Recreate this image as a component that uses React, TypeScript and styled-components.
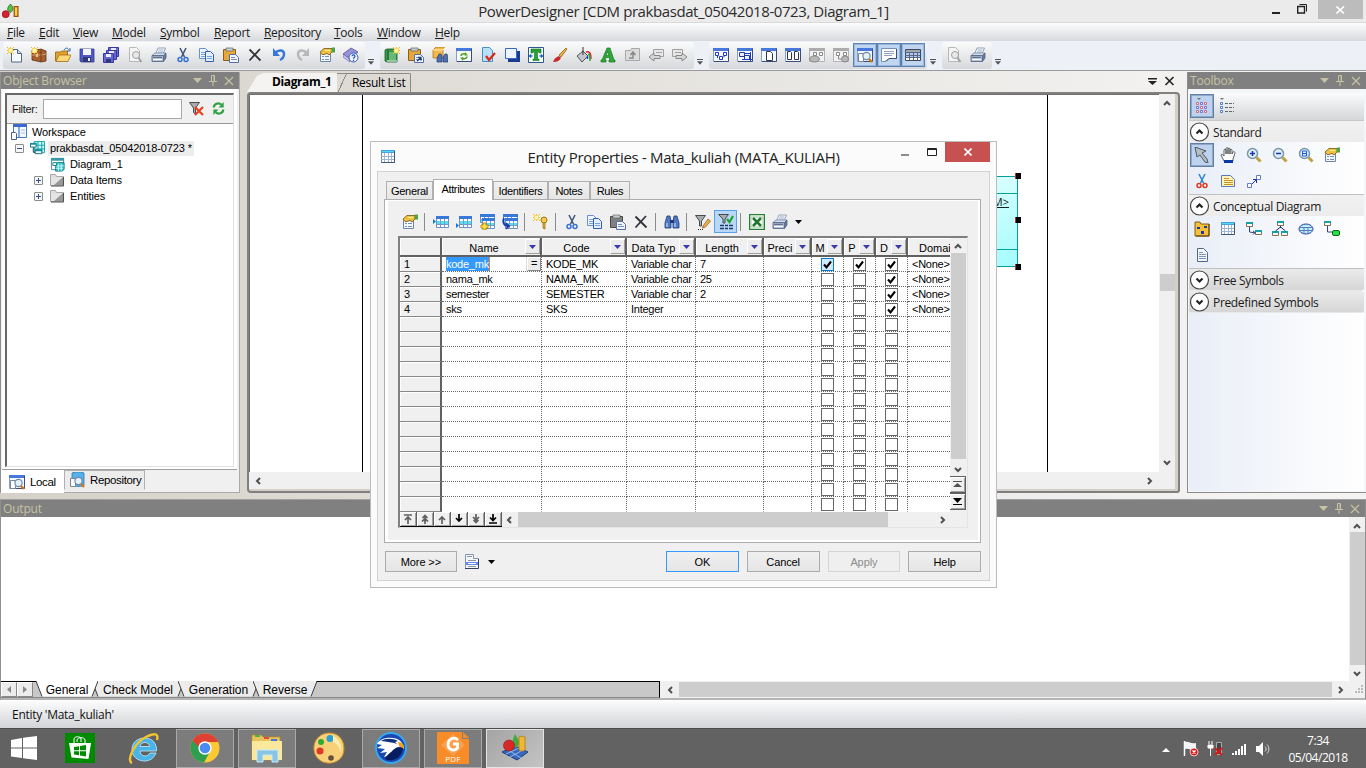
import React from 'react';
import styled, { createGlobalStyle, css } from 'styled-components';

const UI = `"Open Sans", "Noto Sans", sans-serif`;
const SANS = `"Liberation Sans", Arial, sans-serif`;

const Global = createGlobalStyle`
  *, *::before, *::after { box-sizing: border-box; }
  html, body { margin: 0; padding: 0; overflow: hidden; background: #d6d3cc; }
  svg { display: block; flex: none; }
`;

/* ---------- icons ---------- */

const star = (x: number, y: number) => (
  <g key={`s${x}${y}`}>
    <path d={`M${x} ${y}h1v1h-1zM${x + 3} ${y}h1v2h-1zM${x + 6} ${y}h1v1h-1zM${x} ${y + 6}h1v1h-1zM${x + 3} ${y + 5}h1v2h-1zM${x + 6} ${y + 6}h1v1h-1zM${x} ${y + 3}h2v1h-2zM${x + 5} ${y + 3}h2v1h-2z`} fill="#e8b838" />
    <path d={`M${x + 1} ${y + 1}h5v5h-5z`} fill="#f8d860" />
    <path d={`M${x + 2} ${y + 2}h3v3h-3z`} fill="#fff6b0" />
  </g>
);

const redX = (x: number, y: number, s: number, c = '#e03020', w = 2) => (
  <path d={`M${x} ${y}l${s} ${s}M${x + s} ${y}l${-s} ${s}`} stroke={c} strokeWidth={w} fill="none" />
);

const winFrame = (
  <>
    <path d="M.5 1.5h15v13H.5z" fill="#f4f8ff" stroke="#88a0cc" />
    <path d="M0 1h16v3H0z" fill="#4878dc" />
    <path d="M15.5 2v12.5H1" stroke="#3c4c78" fill="none" />
  </>
);
const grayFrame = (
  <>
    <path d="M.5 1.5h15v13H.5z" fill="#f2f2f2" stroke="#b4b4b4" />
    <path d="M0 1h16v3H0z" fill="#acacac" />
  </>
);
const tableBase = (x: number, y: number, w: number, h: number) => (
  <>
    <path d={`M${x + 0.5} ${y + 0.5}h${w - 1}v${h - 1}h${-(w - 1)}z`} fill="#fff" stroke="#6f8fc8" />
    <path d={`M${x} ${y}h${w}v3h${-w}z`} fill="#3878d8" />
    <path d={`M${x + 1} ${y + 5}h${w - 2}v3h${-(w - 2)}z`} fill="#58e0ec" />
    <path d={`M${x + 1} ${y + h - 3.5}h${w - 2}M${x + 4.5} ${y + 3}v${h - 4}M${x + 8.5} ${y + 3}v${h - 4}`} stroke="#7898c8" fill="none" />
  </>
);
const magnifier = (
  <>
    <circle cx="9.5" cy="9" r="3.6" fill="#e4f2fc" stroke="#7088a8" strokeWidth="1.2" />
    <path d="M12 12l3 3" stroke="#c87818" strokeWidth="2.4" />
  </>
);
const smallNode = (x: number, y: number, c = '#2038c8') => (
  <path d={`M${x + 0.5} ${y + 0.5}h3v3h-3z`} fill="#fff" stroke={c} />
);
const entNode = (x: number, y: number) => (
  <>
    <path d={`M${x + 0.5} ${y + 0.5}h6v4h-6z`} fill="#fff" stroke="#807050" />
    <path d={`M${x} ${y}h7v2h-7z`} fill="#18a0a8" />
  </>
);
const props = (
  <>
    <path d="M1.5 6.5h10v8h-10z" fill="#f4f8fc" stroke="#7088a8" />
    <path d="M3 9.5h2M6 9.5h4M3 12.5h2M6 12.5h4" stroke="#7890b0" />
    <path d="M1 5l4-3.500h8v3.500l-3 3-2-1.500-3 1H3z" fill="#f0c040" stroke="#705810" strokeWidth=".8" />
    <path d="M6 3.500h5" stroke="#fff0a0" />
    <path d="M13 .5h3v5h-3z" fill="#48a848" />
  </>
);
const scissors = (blade: string, handle: string) => (
  <>
    <path d="M5 1l4.5 9M11 1L6.5 10" stroke={blade} strokeWidth="1.6" fill="none" />
    <circle cx="5" cy="12.5" r="2" fill="none" stroke={handle} strokeWidth="1.5" />
    <circle cx="11" cy="12.5" r="2" fill="none" stroke={handle} strokeWidth="1.5" />
  </>
);
const copy = (
  <>
    <path d="M.5 1.5h6l3 3v7h-9z" fill="#f0f6ff" stroke="#6890d0" />
    <path d="M6.5 4.5h5l3 3v7h-8z" fill="#e4eefc" stroke="#3060b0" />
    <path d="M2 5.5h4M2 7.5h4M2 9.5h4M8 9.5h5M8 11.5h5" stroke="#78a0e0" />
  </>
);
const paste = (board: string, edge: string) => (
  <>
    <path d="M.5 2.5h12v11H.5z" fill={board} stroke={edge} />
    <path d="M3 1h7v3H3z" fill="#c8ccd4" stroke="#606468" strokeWidth=".7" />
    <path d="M6.5 7.5h6l3 3v5h-9z" fill="#f0f4fa" stroke="#5870a0" />
    <path d="M8 10.5h4M8 12.5h6" stroke="#7890b8" />
  </>
);
const printer = (
  <>
    <path d="M4.5 7L7 1h7.5L12 7z" fill="#fff" stroke="#8898b0" strokeWidth=".9" />
    <path d="M7.5 3h5M6.8 5h5" stroke="#98a8c0" />
    <path d="M1 8.5L4 6h11l-2.5 2.5z" fill="#d4dff0" stroke="#7084a4" strokeWidth=".8" />
    <path d="M12.5 8.5L15 6v5l-2.5 3.5z" fill="#6c7c98" stroke="#50607c" strokeWidth=".8" />
    <path d="M1 8.5h11.5v6H1z" fill="#a8b8d0" stroke="#586c8c" strokeWidth=".9" />
    <path d="M2 12.5h9" stroke="#fff" strokeWidth="1.3" />
    <path d="M2 10.3h9" stroke="#546480" />
  </>
);
const binoc = (
  <>
    <path d="M3 2h3l1 5v7H1V9zM10 2h3l2 7v5H9V7z" fill="#5078c0" stroke="#203c78" strokeWidth=".8" />
    <path d="M6 6h4v3H6z" fill="#203c78" />
    <path d="M3 9v4M11 9v4" stroke="#b8d0f8" strokeWidth="1.3" />
  </>
);
const funnel = <path d="M.5 1.5h10L6.5 7v6l-2-1.5V7z" fill="#a8acb0" stroke="#484c50" />;
const cube = (
  <>
    <path d="M1.5 1.5h13v12h-13z" fill="#fff" stroke="#5c7c98" />
    <path d="M1 1h14v3H1z" fill="#3898a8" />
    <path d="M6 7l2-1h7v7l-2 2H6z" fill="#38c8c8" stroke="#087880" />
    <path d="M6 9.5h9M6 12h8M9 7v8M12 7v8" stroke="#e0ffff" strokeWidth=".8" />
    <path d="M3 6h4v3H3z" fill="#fff" stroke="#088088" />
  </>
);
const plainTable = (
  <>
    <path d="M1.5 1.5h13v12h-13z" fill="#fff" stroke="#7088ac" />
    <path d="M1 7.5h14M1 10.5h14M4.5 4v9M8.5 4v9M11.5 4v9" stroke="#a0b4d0" />
    <path d="M1 1h14v3H1z" fill="#48a0dc" />
    <path d="M2 2h12v1H2z" fill="#50d8f0" />
    <path d="M14.5 2v11.5h-13" stroke="#405878" fill="none" />
  </>
);
const zoomGlass = (inner: React.ReactNode) => (
  <>
    <path d="M10.5 10.5l4 4" stroke="#c0a040" strokeWidth="3" />
    <circle cx="6.5" cy="6.5" r="5" fill="#dcecf8" stroke="#7898a8" strokeWidth="1.5" />
    {inner}
  </>
);
const folder = (
  <>
    <path d="M1.5 2.5h5l1 2h7v9h-13z" fill="#dcdcdc" stroke="#a8a8a8" />
    <path d="M2 5h12v8H2z" fill="#e4e4e4" />
    <path d="M14 5v8H5z" fill="#989898" />
    <path d="M14.5 5v9H2" stroke="#505050" fill="none" />
  </>
);
const rowsArrow = (y: number) => (
  <>
    {tableBase(3, 2, 13, 12)}
    <path d={`M0 ${y}l3 2.5-3 2.5z`} fill="#1878e0" />
  </>
);

const ICONS: Record<string, React.ReactNode> = {
  newDoc: <><path d="M4.5 2.5h6l4 4v8.5h-10z" fill="#f8fbff" stroke="#506888" /><path d="M10.5 2.5v4h4" fill="#c8d8ec" stroke="#506888" />{star(0, 0)}</>,
  newProject: <><path d="M1 4l9-2 5 2v10l-5 1-9-2z" fill="#a86030" stroke="#5c3010" strokeWidth=".8" /><path d="M1 8h9l5-1" stroke="#d8a070" fill="none" /><path d="M10 3v12" stroke="#703c18" /><path d="M5 7h2v3H5z" fill="#f0c890" />{star(0, 0)}</>,
  open: <><path d="M.5 5h5l1-1h6v10H.5z" fill="#e0a030" stroke="#906010" strokeWidth=".8" /><path d="M4 8h12l-3 6.5H1z" fill="#fcd878" stroke="#a87018" strokeWidth=".8" /><path d="M9 3c2-3 4-2 5 0M15 1v3h-3" stroke="#3868b0" fill="none" /></>,
  save: <><path d="M1 2h14v13H2l-1-1z" fill="#5058c8" stroke="#303888" strokeWidth=".8" /><path d="M4 2h8v6H4z" fill="#f4f6ff" /><path d="M4 10h8v5H4z" fill="#303878" /><path d="M9 11h2v3H9z" fill="#e8ecff" /></>,
  saveAll: <>{[[5, 0], [3, 3], [0, 6]].map(([x, y]) => <g key={x}><path d={`M${x + 0.5} ${y + 0.5}h10v9h-10z`} fill="#6468d0" stroke="#38389c" /><path d={`M${x + 3} ${y + 1}h5v3h-5z`} fill="#e8ecff" /><path d={`M${x + 3} ${y + 6}h5v3h-5z`} fill="#303878" /></g>)}</>,
  previewGray: <><path d="M2.5.5h7l3 3v11h-10z" fill="#f4f4f4" stroke="#b8b8b8" /><circle cx="9" cy="8" r="3.5" fill="#e8e8e8" stroke="#a0a0a0" /><path d="M11.5 11l3 4" stroke="#a0a0a0" strokeWidth="2" /></>,
  printer, copy, binoc, cube, plainTable, folder, props,
  cut: scissors('#405878', '#3870d0'),
  cutRed: scissors('#3088d0', '#e03820'),
  paste: paste('#e8a838', '#886020'),
  pasteGray: paste('#808080', '#484848'),
  pasteLink: <>{paste('#e8a838', '#886020')}<path d="M9 14l4-3M10 10.5h3v3" stroke="#203878" fill="none" strokeWidth="1.3" /></>,
  del: <path d="M2.5 2.5l11 11M13 2L2.5 13.5" stroke="#303438" strokeWidth="1.800" fill="none" />,
  undo: <><path d="M4 6c4-4 9-3 9 1 0 3-2 5-4 6" stroke="#3878d8" strokeWidth="2.4" fill="none" /><path d="M2 1v8h7z" fill="#3878d8" /></>,
  redo: <><path d="M12 6C8 2 3 3 3 7c0 3 2 5 4 6" stroke="#b8b8b8" strokeWidth="2.4" fill="none" /><path d="M14 1v8H7z" fill="#b8b8b8" /></>,
  help: <><path d="M0 7l8-6 7 4-8 7z" fill="#9890d8" stroke="#5850a0" strokeWidth=".8" /><path d="M0 7l7 5v3L0 10z" fill="#c8c4ec" stroke="#5850a0" strokeWidth=".6" /><circle cx="10.5" cy="10.5" r="4.5" fill="#eef4ff" stroke="#3860b8" /><path d="M9 9.3c0-2 3-2 3 0 0 1.2-1.5 1-1.5 2.4M10.5 12.7v1.2" stroke="#2850b0" fill="none" strokeWidth="1.2" /></>,
  book: <><path d="M1 3l2-1h10v13H3l-2-1z" fill="#389848" stroke="#185828" strokeWidth=".8" /><path d="M3 14h10" stroke="#fff" /><path d="M4 3v10" stroke="#185828" /><path d="M5 5h7v8H5z" fill="#68b878" />{star(9, 0)}</>,
  findObj: <><path d="M1 3l3-3h10l-3 3v8H1z" fill="#f4b848" stroke="#a87820" strokeWidth=".8" /><path d="M1 3h10l3-3" stroke="#fff0b8" fill="none" /><path d="M7 7h2l1 3v5H5v-4zM13 7h2l1 4v4h-5v-5z" fill="#5070b0" stroke="#243c70" strokeWidth=".7" /></>,
  refreshWin: <>{winFrame}<path d="M5 9c0-2 3-3 5-1.5M11 9.500c0 2-3 3-5 1.5" stroke="#58a020" strokeWidth="1.6" fill="none" /><path d="M9 5l3 3.500H8.500zM7 14l-3-3.500h3.500z" fill="#58a020" /></>,
  check: <><path d="M2.5.5h7l3 3v11h-10z" fill="#b8e0f8" stroke="#4890c0" /><path d="M6 9l3 4 6-7" stroke="#d82818" strokeWidth="2.2" fill="none" /></>,
  shadow: <><path d="M4 4h12v11H4z" fill="#1c3c90" /><path d="M1.5 1.5h11v10h-11z" fill="#eef4ff" stroke="#3868c8" /></>,
  textFit: <><path d="M.5.5h15v15H.5z" fill="#f4fff4" stroke="#305890" /><path d="M3 2h10v4h-1.5L11 5H9.5v7H11v1.5H5V12h1.5V5H5l-.5 1H3z" fill="#28a038" stroke="#107020" strokeWidth=".6" /><path d="M1 9h4M11 9h4M1 9l2-1.5v3zM15 9l-2-1.5v3z" stroke="#2060c8" fill="#2060c8" strokeWidth=".8" /></>,
  brush: <><path d="M7 8l7-7 1 1-6 8z" fill="#e8b040" stroke="#98680c" strokeWidth=".8" /><path d="M1 15c1-3 3-5 6-6l2 2c-2 3-4 4-8 4z" fill="#c82828" /></>,
  bucket: <><path d="M1 9l6-5 5 5-6 6z" fill="#c4c8cc" stroke="#505458" /><path d="M7 0v8" stroke="#303030" /><path d="M10 5c4-1 5 2 5 7" stroke="#e02020" fill="none" strokeWidth="1.5" /><path d="M12 7c2 0 2 3 2 7" stroke="#20a838" fill="none" strokeWidth="1.5" /><path d="M11.5 9v3" stroke="#2040d0" strokeWidth="1.5" /></>,
  fontA: <path d="M7 1h3l4 12h1v2h-6v-2h1l-.8-2.5H5.7L5 13h1v2H1v-2h1zM6.3 8.5h2.6L7.6 4.3z" fill="#30a838" stroke="#187820" strokeWidth=".7" />,
  upGray: <><path d="M1.5 3.5h5l1-2h8v12h-14z" fill="#dcdcdc" stroke="#a8a8a8" /><path d="M5 11h4V6M6.5 8L9 5l2.5 3" stroke="#888" fill="none" strokeWidth="1.5" /></>,
  backGray: <><path d="M5.5 2.5h10v7h-10z" fill="#e8e8e8" stroke="#a0a0a0" /><path d="M8 5.5h6" stroke="#a0a0a0" /><path d="M1 10l5-4v2.5h6v3H6V14z" fill="#d8d8d8" stroke="#888" /></>,
  fwdGray: <><path d="M.5 2.5h10v7H.5z" fill="#e8e8e8" stroke="#a0a0a0" /><path d="M3 5.5h6" stroke="#a0a0a0" /><path d="M15 10l-5-4v2.5H4v3h6V14z" fill="#d8d8d8" stroke="#888" /></>,
  vLinks: <>{winFrame}{smallNode(2, 5)}{smallNode(10, 5)}<path d="M4.5 9v2M11.5 9l-1.500 1.500" stroke="#2038c8" fill="none" />{smallNode(6, 9)}</>,
  vNodes: <>{winFrame}<path d="M2.5 5.5h5v4h-5zM7.5 8.5h5v4h-5z" fill="#e8f0ff" stroke="#2038a8" /><path d="M8 6.5h6M13.5 5v9M5 12.5h10" stroke="#2038c8" /></>,
  vPage: <>{winFrame}<path d="M5.5 4.5h4l2 2v7h-6z" fill="#fff" stroke="#303848" /></>,
  vPages: <>{winFrame}<path d="M2.5 4.5h3l1 1v7h-4zM9.5 4.5h3l1 1v7h-4z" fill="#fff" stroke="#303848" /></>,
  vGray1: <>{grayFrame}{smallNode(4, 5, '#888')}{smallNode(10, 5, '#888')}<ellipse cx="5.5" cy="12" rx="5" ry="3" fill="#b8b8b8" stroke="#888" /></>,
  vGray2: <>{grayFrame}{smallNode(3, 5, '#888')}{smallNode(10, 5, '#888')}<path d="M5.5 9v3h4" stroke="#888" fill="none" /><ellipse cx="12" cy="12" rx="3.5" ry="3" fill="#b8b8b8" stroke="#888" /></>,
  vBrowse: <>{winFrame}<path d="M1.5 6.5h5v8h-5z" fill="#fff" stroke="#788898" />{magnifier}</>,
  vNote: <><path d="M.5 1.5h15v10H8l-4 3H.5z" fill="#fff" stroke="#7890b0" /><path d="M3 4.5h10M3 6.5h10M3 8.5h8" stroke="#90a4c0" /><path d="M15.5 2v9.5H8l-3 3" stroke="#405070" fill="none" /></>,
  vTable: <><path d="M.5 2.5h15v11H.5z" fill="#fff" stroke="#404858" /><path d="M1 3h14v2H1z" fill="#a0a8b4" /><path d="M1 6h14v5H1z" fill="#a8c8ff" /><path d="M0 5.5h15M0 8.5h15M0 10.5h15M4.5 5v8M8.5 5v8M12.5 5v8" stroke="#606878" /></>,
  funnelX: <>{funnel}{redX(6, 6, 8, '#e84020', 2.2)}</>,
  funnelEdit: <><path d="M.5 1.5h10L6.5 7v5h-2V7z" fill="#a8acb0" stroke="#484c50" /><path d="M8 12l5-7 2.5 2-5 6-3 1z" fill="#f0b050" stroke="#906020" strokeWidth=".8" /><path d="M3 15.5h1M5 15.5h1M7 15.5h1" stroke="#303030" /></>,
  funnelCheck: <><path d="M.5.5h10L7 5v4H5V5z" fill="#a8acb0" stroke="#484c50" /><path d="M9 5l2.5 3L15 2" stroke="#20a028" strokeWidth="2.2" fill="none" /><path d="M2 11.5h4M7 11.5h3M11 11.5h4M2 14.5h4M7 14.5h3M11 14.5h4" stroke="#203870" strokeWidth="1.4" /></>,
  reload: <><path d="M3 7c0-4 5-6 8-3" stroke="#30a040" strokeWidth="2.4" fill="none" /><path d="M13.5 1v6H8z" fill="#30a040" /><path d="M13 9c0 4-5 6-8 3" stroke="#30a040" strokeWidth="2.4" fill="none" /><path d="M2.5 15V9H8z" fill="#30a040" /></>,
  workspace: <><path d="M2.5.5h13v13h-13z" fill="#f4f8ff" stroke="#4878c8" /><path d="M2 0h14v3H2z" fill="#3868d0" /><path d="M7 3h2v10H7z" fill="#88a8e0" /><path d="M10 6h4M10 9h4" stroke="#a8c0e8" /><path d="M.5 8.5h4l1 1v6H.5z" fill="#fff" stroke="#506080" /></>,
  model: <><path d="M4.5.5h11v12h-11z" fill="#c0fcfc" stroke="#18a0a8" /><path d="M4 4.5h12M4 8.5h12M8.5 0v13M12.5 0v13" stroke="#18a0a8" /><path d="M.5 2.5h6v4h-6zM5.5 9.5h7v4h-7z" fill="#fff" stroke="#087080" /><path d="M0 2h7v2H0zM5 9h8v2H5z" fill="#1890a0" /><path d="M3.5 7v5h2" stroke="#304050" fill="none" /></>,
  grid9: <><path d="M3 0h4l-2 2z" fill="#707070" />{[0, 1, 2].map(r => [0, 1, 2].map(c => <path key={`${r}${c}`} d={`M${2.5 + c * 4} ${4.5 + r * 4}h2v2h-2z`} fill="#fff" stroke={(r + c) % 2 ? '#7070d8' : '#d86878'} />))}</>,
  list3: <><path d="M1 0h4l-2 2z" fill="#707070" />{[0, 1, 2].map(r => <g key={r}><path d={`M1.5 ${4.5 + r * 4}h2v2h-2z`} fill="#fff" stroke="#5080d0" /><path d={`M6 ${5.5 + r * 4}h9`} stroke="#606870" strokeDasharray="3 1" /></g>)}</>,
  arrow: <path d="M1 0l2 10 3-2 5 7 3 1-1-4-5-6 4-2z" fill="#b4bcc4" stroke="#505860" />,
  hand: <><path d="M4 14L1 8c0-1 2-1 3 1V3c0-1 2-1 2 0v4-5.500c0-1.2 2-1.2 2 0V7 2c0-1 2-1 2 0v5-4c0-1 2-1 2 0v4l1-2c1-1 2 0 2 1l-2 6v2z" fill="#fff" stroke="#383c40" strokeWidth=".8" /><path d="M4 13h9v3H4z" fill="#0838a8" /></>,
  zoomIn: zoomGlass(<path d="M4 6.5h5M6.5 4v5" stroke="#1838a8" strokeWidth="1.5" />),
  zoomOut: zoomGlass(<path d="M4 6.5h5" stroke="#1838a8" strokeWidth="1.5" />),
  zoomPage: zoomGlass(<path d="M4.5 4h4v5h-4zM4 6.5h5" stroke="#2058d8" fill="none" />),
  note: <><path d="M1.5 2.5h9l4 4v7h-13z" fill="#fff4b8" stroke="#5878c0" /><path d="M4 5.5h5M4 7.5h9M4 9.5h9M4 11.5h9" stroke="#c89028" /></>,
  link: <><path d="M1.5 10.5h4v4h-4zM10.5 2.5h4v4h-4z" fill="#fff" stroke="#6080c0" /><path d="M6 11l4-4M7 6.5h3.5V10" stroke="#2030a0" fill="none" /></>,
  package: <><path d="M1 3V1h5l1 2h8v12H1z" fill="#f8c038" stroke="#705010" strokeWidth=".9" /><path d="M15 3v12H2" stroke="#604008" fill="none" /><path d="M3 6h3v2H3zM10 5h3v2h-3zM7 10h3v3H7z" fill="#1838b0" /></>,
  relation: <>{entNode(0, 1)}{entNode(9, 9)}<path d="M3.5 6v5l6 1M7 10l2 1.5-2 2" stroke="#304880" fill="none" /></>,
  inherit: <>{entNode(5, 0)}{entNode(0, 10)}{entNode(9, 10)}<path d="M8.5 5v2M3.5 10l5-4 5 4" stroke="#202880" fill="none" /></>,
  assoc: <><ellipse cx="8" cy="8" rx="7" ry="5" fill="#b8f4fc" stroke="#2838a8" /><path d="M1 6.5h14M1 9.5h14M6 7v6M10 7v6" stroke="#6078c0" /></>,
  assocLink: <>{entNode(0, 0)}<path d="M3.5 5v6h5" stroke="#304880" fill="none" /><rect x="8.5" y="9.5" width="7" height="5" rx="1.5" fill="#28e040" stroke="#106028" /></>,
  file: <><path d="M3.5 1.5h6l4 4v9h-10z" fill="#f4f8fc" stroke="#506888" /><path d="M5 5.5h4M5 7.5h7M5 9.5h7M5 11.5h7" stroke="#7c94b4" /></>,
  insRow: rowsArrow(5),
  addRow: rowsArrow(9),
  newRow: <>{tableBase(1, 0, 15, 9)}{tableBase(3, 4, 13, 11)}<path d="M4 9h3v2h2v3H7v2H4v-2H2v-3h2z" fill="#ffe040" stroke="#a88010" strokeWidth=".8" /></>,
  reuseRow: <>{tableBase(1, 0, 15, 9)}{tableBase(3, 4, 13, 11)}<path d="M2 4c-2 4 0 8 4 8M4 9l3 3-3 3" stroke="#1838b0" strokeWidth="1.7" fill="none" /></>,
  key: <>{star(0, 0)}<circle cx="11" cy="6" r="3" fill="#f8c848" stroke="#a07818" /><path d="M10 9h2v6h-1l-1-1z" fill="#e8a828" stroke="#a07818" strokeWidth=".8" /></>,
  excel: <><path d="M.5.5h15v15H.5z" fill="#f0fff0" stroke="#288038" strokeWidth="1.5" /><path d="M2 3h12v10H2z" fill="#fff" stroke="#88b890" strokeWidth=".8" /><path d="M4 4l8 8M12 4l-8 8" stroke="#207830" strokeWidth="2.6" /></>,
  menuDoc: <><path d="M1.5.5h8v4h5v10h-13z" fill="#f4f6fa" stroke="#8494ac" /><path d="M3 2.5h5M4 6.5h8M4 12.5h8" stroke="#8c949c" /><path d="M2 8h12v3H2z" fill="#6888f0" /><path d="M4 9.5h8" stroke="#fff" /><path d="M14.5 5v9.5H1" stroke="#304460" fill="none" /></>,
  repo: <><path d="M3 1c3-1.5 9-1.5 12 0v12c-3 2-9 2-12 0z" fill="#58b0e8" stroke="#2878b0" strokeWidth=".8" /><path d="M1.5 6.5h5v8h-5z" fill="#fff" stroke="#788898" />{magnifier}</>,
  pd: <><path d="M8 1c3 3 3 6 0 8-4-2-3-5 0-8z" fill="#58c048" stroke="#287020" strokeWidth=".8" /><circle cx="3.5" cy="10.5" r="3.3" fill="#d82030" stroke="#881018" strokeWidth=".7" /><path d="M11.5 3.5H15v9h-3.5z" fill="#fcd040" stroke="#a05010" strokeWidth="1.2" /></>,
};

const Icon = ({ n, s = 16 }: { n: string; s?: number }) => (
  <svg width={s} height={s} viewBox="0 0 16 16" fill="none">{ICONS[n]}</svg>
);

type Dir = 'up' | 'down' | 'left' | 'right';
const CHEV: Record<Dir, string> = {
  up: 'M1 6l3-3 3 3', down: 'M1 2l3 3 3-3', left: 'M6 1L3 4l3 3', right: 'M2 1l3 3-3 3',
};
const Chevron = ({ d, c = '#505050' }: { d: Dir; c?: string }) => (
  <svg width="8" height="8" viewBox="0 0 8 8"><path d={CHEV[d]} stroke={c} strokeWidth="2" fill="none" /></svg>
);
const Caret = ({ c = '#000', w = 7 }: { c?: string; w?: number }) => (
  <svg width={w} height="4" viewBox="0 0 7 4"><path d="M0 0h7L3.5 4z" fill={c} /></svg>
);

/* ---------- window frame ---------- */

const Screen = styled.div`
  position: relative; width: 1366px; height: 768px; overflow: hidden;
  display: flex; flex-direction: column; background: #d6d3cc;
  font: 12px ${UI}; color: #1a1a1a; white-space: nowrap;
`;
const TitleBar = styled.header`
  display: flex; height: 23px; background: #ebebeb; align-items: center;
  padding-left: 2px; border-bottom: 1px solid #d9dadc;
`;
const AppTitle = styled.h1`
  flex: 1; margin: 0; text-align: center; font: 15px/22px ${UI}; letter-spacing: -.42px; color: #2b2b2b; padding-left: 85px;
`;
const WinButtons = styled.div`
  display: flex; align-self: flex-start; align-items: center; height: 19px;
`;
const MenuBar = styled.nav`
  display: flex; height: 18px; padding-left: 7px; background: linear-gradient(#fcfcfd, #d7d9dc);
  font: 12px/20px ${UI}; letter-spacing: -.3px;
`;
const MenuItem = styled.span<{ $w: number }>`
  width: ${p => p.$w}px;
`;
const ToolStrip = styled.div`
  display: flex; height: 30px; padding: 1px 0 1px 3px; background: #edf1f7; border-bottom: 1px solid #9b9b9b;
`;
const ToolGroup = styled.div`
  display: flex; align-items: center; padding: 0 2px 1px 0; border-radius: 3px; height: 27px;
  background: linear-gradient(#fbfbfc, #d6d8db);
`;
const ToolButton = styled.span<{ $on?: boolean }>`
  display: flex; width: 24px; height: 24px; align-items: center; justify-content: center;
  ${p => p.$on && css`background: #c0d6f0; border: 1px solid #5c80b0; box-shadow: inset 0 0 0 1px #98b8e0;`}
`;
const Overflow = styled.span`
  width: 15px; height: 27px; display: flex; flex-direction: column; align-items: center; justify-content: flex-end;
  gap: 1px; padding: 0 4px 4px 0;
  &::before { content: ''; width: 6px; height: 1px; background: #555; }
`;

/* ---------- docked panels ---------- */

const Workspace = styled.main`
  display: flex; height: 428px; padding-top: 1px;
  background: linear-gradient(90deg, #d5d1c9, #f4f3f2 90%);
`;
const PanelHead = styled.div`
  display: flex; align-items: center; height: 17px; padding: 0 5px 0 2px; background: #808080; color: #c6c3a2;
  font: 12px/17px ${UI}; letter-spacing: -.18px;
`;
const LeftDock = styled.aside`
  width: 240px; height: 421px; border: 1px solid #aaa; border-top: 0; border-left: 1px solid #909090; background: #f0f0f0; display: flex; flex-direction: column;
`;
const LeftBody = styled.div`
  height: 381px; margin: 0 2px 0 1px; padding: 4px 3px 2px 3px; background: #fff; border-bottom: 1px solid #a0a0a0;
`;
const TreeFrame = styled.div`
  height: 374px; border: 1px solid #e0e0e0; border-top: 2px solid #696969; border-left: 2px solid #696969; background: #fff; 
`;
const FilterRow = styled.div`
  display: flex; align-items: center; height: 29px; padding: 0 6px 1px 5px; background: #f0f0f0; border-bottom: 1px solid #999;
  font: 11px ${SANS}; letter-spacing: -.3px;
`;
const FilterInput = styled.div`
  width: 139px; height: 20px; margin: 0 7px 0 6px; border: 1px solid #a8a8a8; background: #fff;
`;
const TreeRow = styled.div<{ $d: number }>`
  display: flex; align-items: center; height: 16px; padding-left: ${p => p.$d}px; font: 11px/15px ${SANS}; letter-spacing: -.12px; color: #000;
`;
const Expander = styled.span<{ $plus?: boolean }>`
  width: 9px; height: 9px; margin-right: 6px; border: 1px solid #8c8c8c; border-radius: 1px;
  background: ${p => p.$plus ? 'linear-gradient(#34508c,#34508c) center/1px 5px no-repeat,' : ''}
    linear-gradient(#34508c,#34508c) center/5px 1px no-repeat, #f6f6f6;
`;
const Label = styled.span<{ $sel?: boolean }>`
  margin-left: 3px; padding: 0 2px 0 2px; background: ${p => p.$sel ? '#ededed' : 'transparent'};
`;
const DockTabs = styled.div`
  display: flex; align-items: flex-start; font: 11.5px ${SANS}; letter-spacing: -.35px; color: #000;
`;
const DockTab = styled.span<{ $on?: boolean; $w: number }>`
  display: flex; align-items: center; gap: 5px; width: ${p => p.$w}px; padding-left: ${p => p.$on ? 8 : 4}px;
  height: ${p => p.$on ? 23 : 20}px; background: ${p => p.$on ? '#fff' : '#ececec'};
  ${p => !p.$on && css`border: 1px solid #b0b0b0; border-bottom-color: #ececec;`}
`;

/* ---------- diagram area ---------- */

const DocArea = styled.section`
  width: 933px; height: 421px; margin-left: 7px;
`;
const DocTabs = styled.div`
  display: flex; height: 20px; align-items: flex-end; padding-right: 5px;
`;
const DocTabShape = styled.div<{ $on?: boolean }>`
  height: 19px; font: ${p => p.$on ? 'bold ' : ''}12px/17px ${UI}; letter-spacing: ${p => p.$on ? -.38 : -.32}px; color: #000;
  ${p => p.$on
    ? css`width: 90px; padding-left: 25px; background: #f4f3f1; clip-path: polygon(0 100%, 10px 15%, 16px 0, 100% 0, 100% 100%);`
    : css`width: 74px; padding-left: 15px; border-top: 1px solid #8a8a8a; border-right: 1px solid #8a8a8a; background: linear-gradient(115deg, transparent 8px, #8a8a8a 8px, #8a8a8a 9px, #dedbd5 9px); border-radius: 0 2px 0 0;`}
`;
const DocFrame = styled.div`
  height: 401px; border: 2px solid #808080; border-radius: 4px 4px 3px 4px; background: #d4d0c8;
  display: grid; grid-template-columns: 910px 16px; grid-template-rows: 378px 17px;
`;
const Canvas = styled.div`
  background: #fff; padding-left: 112px; border-left: 1px solid #707070; border-top: 1px solid #707070; overflow: hidden;
`;
const Paper = styled.div`
  position: relative; width: 686px; height: 100%; border: solid #000; border-width: 0 1px;
`;
const EntityBox = styled.div`
  position: absolute; left: 555px; top: 81px; width: 100px; height: 91px; border: 1px solid #00a0a0;
  background: linear-gradient(160deg, #e8ffff, #a4fcfc); text-align: right; padding: 17px 8px 0 0;
  font: 11px/15px ${UI}; text-decoration: underline; color: #122;
  &::before { content: ''; position: absolute; left: 0; right: 0; top: 16px; height: 57px; border: solid #00a0a0; border-width: 1px 0; }
`;
const Handle = styled.i<{ $y: number }>`
  position: absolute; left: 652px; top: ${p => p.$y}px; width: 6px; height: 6px; background: #000; border-left: 1px solid #c03030;
`;
const VScroll = styled.div`
  display: flex; flex-direction: column; align-items: center; background: #f0f0f0; padding: 5px 0;
`;
const HScroll = styled.div`
  display: flex; align-items: center; background: #f0f0f0; padding: 0 5px; min-width: 0;
`;
const GridHScroll = styled(HScroll)`padding: 0;`;
const OutHScroll = styled(HScroll)`flex: 1; padding: 0 1px 0 6px;`;
const Thumb = styled.i<{ $w?: number; $h?: number; $gap?: number }>`
  flex: none; background: #cdcdcd;
  width: ${p => p.$w ?? 15}px; height: ${p => p.$h ?? 15}px;
  margin: ${p => p.$w ? `0 0 0 ${p.$gap ?? 5}px` : `${p.$gap ?? 3}px 0 0`};
`;
const PushH = styled.span`margin-left: auto; display: flex;`;
const PushV = styled.span`margin-top: auto; display: flex;`;

/* ---------- toolbox ---------- */

const ToolDock = styled.aside`
  width: 179px; height: 421px; margin-left: 7px; border: 1px solid #8c8c8c; border-top: 0; border-right: 0; background: #f4f7fa; 
`;
const ToolBody = styled.div`
  margin: 4px 2px 0 1px; background: linear-gradient(90deg, #e9eef7, #fff); height: 398px;
`;
const ToolModes = styled.div`
  display: flex; align-items: center; gap: 1px; height: 28px; border-bottom: 1px solid #c8c8c8; background: linear-gradient(#fbfbfc, #d4d6d8); padding: 0 0 3px 1px;
`;
const GroupHead = styled.div<{ $closed?: boolean }>`
  display: flex; align-items: center; gap: 3px; height: ${p => p.$closed ? 22 : 21}px; padding-left: 1px; font: 12px/21px ${UI}; letter-spacing: -.34px;
  background: ${p => p.$closed ? 'linear-gradient(#ebebeb,#d6d6d6)' : 'linear-gradient(#f1f1f1,#ececec)'};
  ${p => p.$closed && css`border-bottom: 1px solid #e8e8e8; border-radius: 2px;`}
  span { padding-top: 2px; }
`;
const Palette = styled.div<{ $h: number }>`
  display: grid; grid-template-columns: repeat(6, 26px); grid-auto-rows: 26px; height: ${p => p.$h}px; border-bottom: 1px solid #c0c0c0; padding-left: 1px;
`;
const Tool = styled.span<{ $on?: boolean }>`
  width: 24px; height: 24px; display: flex; align-items: center; justify-content: center; margin: 1px 0 0 0;
  ${p => p.$on && css`background: #bcd2ee; border: 1px solid #6080a8; box-shadow: inset 0 0 0 1px #90a8c8;`}
`;
const Round = ({ up }: { up?: boolean }) => (
  <svg width="20" height="20" viewBox="0 0 20 20">
    <circle cx="9.5" cy="10" r="9" fill="#fff" stroke="#444" strokeWidth="1.2" />
    <path d={up ? 'M6.5 11.5L9.5 8.5l3 3' : 'M6.5 8.5L9.5 11.500l3-3'} stroke="#222" strokeWidth="2.2" fill="none" />
  </svg>
);

/* ---------- output, status, taskbar ---------- */

const Output = styled.section`
  height: 201px; border: solid #909090; border-width: 1px 1px 2px; border-bottom-color: #b4b4b4; border-top-color: #a0a0a0; background: #fff; display: flex; flex-direction: column;
`;
const OutMain = styled.div`display: flex; flex: 1; justify-content: flex-end;`;
const OutFoot = styled.div`display: flex; height: 17px;`;
const OutTabs = styled.div`
  position: relative; display: flex; width: 659px; background: #c8c8c8; border-top: 1px solid #000; border-right: 1px solid #000; border-bottom: 1px solid #888; font: 12px/16px ${SANS}; color: #000;
`;
const Step = styled.span`
  width: 16px; height: 15px; background: #ececec; border: 1px solid #888; border-top-color: #fff; border-left-color: #fff; display: flex; align-items: center; justify-content: center;
`;
const OutTab = styled.span<{ $w: number; $on?: boolean }>`
  position: relative; width: ${p => p.$w}px; text-align: center; margin-right: -6px; z-index: ${p => p.$on ? 1 : 0};
  svg { position: absolute; inset: -1px 0 0 0; z-index: -1; }
`;
const ScrollW = styled.div`width: 16px; background: #f0f0f0; display: flex; flex-direction: column; align-items: center; padding: 5px 0 3px;`;
const Status = styled.footer`
  height: 28px; padding-left: 12px; background: linear-gradient(#fdfdfe, #d2d4d7); font: 12px/29px ${UI}; letter-spacing: -.28px; color: #111;
`;
const Taskbar = styled.footer`
  display: flex; height: 40px; background: #626262; border-top: 1px solid #4c4c4c; color: #fff;
`;
const TaskItem = styled.span<{ $w: number; $kind?: 'run' | 'on'; $nudge?: number }>`
  width: ${p => p.$w}px; height: 39px; display: flex; align-items: center; justify-content: center; margin-right: 4px; padding: 0 0 2px ${p => p.$nudge ?? 0}px;
  ${p => p.$kind === 'run' && css`background: #7c7c7c; border: 1px solid #a9a9a9;`}
  ${p => p.$kind === 'on' && css`background: linear-gradient(135deg, #a4a4a4, #c4c4c4); border: 1px solid #e4e4e4;`}
`;
const Tray = styled.div`display: flex; align-items: center; gap: 8px; margin-left: auto;`;
const Clock = styled.div`
  width: 78px; margin-right: 9px; text-align: center; font: 12px/17px ${UI}; letter-spacing: -.45px; padding-top: 1px;
`;

/* ---------- dialog ---------- */

const Dialog = styled.div`
  position: absolute; left: 370px; top: 141px; width: 627px; height: 447px; border: 1px solid #bcbcbc; background: #fbfbfb; color: #000;
`;
const DlgTitle = styled.div`display: flex; height: 29px; padding-left: 9px; align-items: center;`;
const DlgName = styled.h2`
  flex: 1; margin: 0; text-align: center; font: 15px/28px ${UI}; letter-spacing: -.3px; padding-left: 70px; color: #222;
`;
const DlgButtons = styled.div`display: flex; align-self: flex-start; height: 20px; align-items: center;`;
const CloseBox = styled.span<{ $c: string; $w: number; $h: number; $mr?: number }>`
  width: ${p => p.$w}px; height: ${p => p.$h}px; background: ${p => p.$c}; display: flex; align-items: center; justify-content: center; margin-right: ${p => p.$mr ?? 6}px;
`;
const DlgBody = styled.div`
  margin: 0 6px; height: 410px; border: 1px solid #d2d2d2; background: #f0f0f0; font: 11px ${SANS}; letter-spacing: -.25px;
`;
const Tabs = styled.div`display: flex; height: 27px; align-items: flex-end; padding-left: 8px;`;
const Tab = styled.span<{ $w: number; $on?: boolean }>`
  width: ${p => p.$w}px; height: ${p => p.$on ? 21 : 18}px; line-height: ${p => p.$on ? 18 : 19}px; text-align: center; letter-spacing: -.33px;
  border: 1px solid #b0b0b0; border-bottom: 0;
  background: ${p => p.$on ? '#fff' : 'linear-gradient(#f0f0f0,#e6e6e6)'};
  ${p => p.$on && css`margin-bottom: -1px; position: relative; z-index: 1;`}
`;
const Pane = styled.div`
  margin-left: 6px; width: 597px; height: 344px; border: 1px solid #adadad; padding: 1px 2px 2px 3px; background: #fff;
`;
const PaneInner = styled.div`height: 100%; background: #f0f0f0; padding: 9px 0 0 10px;`;
const GridTools = styled.div`display: flex; align-items: center; height: 23px;`;
const GTool = styled.span<{ $on?: boolean }>`
  width: 23px; height: 23px; display: flex; align-items: center; justify-content: center;
  ${p => p.$on && css`background: #b8d8f8; border: 1px solid #58a0e8;`}
`;
const Sep = styled.i`width: 1px; height: 18px; margin: 0 4px 0 3px; background: #8c8c8c;`;
const GridFrame = styled.div`
  width: 570px; height: 292px; margin-top: 3px; border: 1px solid #e4e4e4; border-top: 2px solid #808080; border-left: 2px solid #808080; background: #f0f0f0;
  display: grid; grid-template-columns: 550px 16px; grid-template-rows: 274px 15px;
`;
const Sheet = styled.div`overflow: hidden; background: #fff; color: #000;`;
const COLS = '42px 100px 85px 69px 68px 48px 32px 32px 32px 42px';
const HeadRow = styled.div`display: grid; grid-template-columns: ${COLS}; height: 19px;`;
const HeadCell = styled.div`
  display: flex; align-items: center; background: #f0f0f0; border: solid #606060; border-width: 0 2px 2px 0; box-shadow: inset 1px 1px #fff; overflow: hidden; letter-spacing: 0;
  span { flex: 1; text-align: center; padding-top: 2px; overflow: hidden; text-indent: 1px; }
  &:last-child { border-right: 0; padding-left: 10px; }
`;
const Drop = styled.i`
  width: 15px; height: 15px; flex: none; display: flex; align-items: center; justify-content: center; background: #ececec; border: 1px solid #a0a0a0; border-top-color: #fff; border-left-color: #fff;
`;
const Row = styled.div`display: grid; grid-template-columns: ${COLS}; height: 15px; line-height: 14px;`;
const Cell = styled.div<{ $last?: boolean }>`
  display: flex; align-items: center; padding-left: 4px; border-right: 1px dotted #686868; border-bottom: 1px dotted ${p => p.$last ? '#fff' : '#686868'}; overflow: hidden; min-width: 0;
  &:last-child { border-right: 0; }
`;
const RowHead = styled(Cell)`
  background: #f0f0f0; border: solid #888; border-width: 0 2px 1px 0; border-right-color: #606060; box-shadow: inset 1px 1px #fff;
`;
const Selected = styled.span`
  background: #3399ff; color: #fff; height: 14px; border-right: 1px solid #e08030; margin-right: auto;
`;
const Equals = styled.span`
  width: 14px; height: 14px; line-height: 11px; text-align: center; background: #ececec; border: 1px solid #888; border-top-color: #fff; border-left-color: #fff; box-shadow: -1px 0 #ddd;
`;
const CheckCell = styled(Cell)`padding: 0; justify-content: center; overflow: visible;`;
const Check = styled.i<{ $hot?: boolean }>`
  width: 13px; height: 13px; margin-top: 1px; flex: none; border: 1px solid ${p => p.$hot ? '#0078d7' : '#686868'}; background: ${p => p.$hot ? '#d4eaff' : '#fff'};
  display: flex; align-items: center; justify-content: center;
`;
const SmallNav = styled.div`display: flex; width: 102px; height: 15px; border-bottom: 1px solid #000;`;
const NavBtn = styled.span<{ $w: number }>`
  width: ${p => p.$w}px; height: 100%; display: flex; align-items: center; justify-content: center; background: #f0f0f0; border: solid #606060; border-width: 0 1px 0 0; box-shadow: inset 1px 1px #fff, inset -1px -1px #a0a0a0;
`;
const GridVScroll = styled.div`display: flex; flex-direction: column; align-items: center; padding-top: 4px; background: #f0f0f0;`;
const EdgeBtn = styled.span`
  width: 16px; height: 17px; display: flex; align-items: center; justify-content: center; border: solid #606060; border-width: 1px 1px 1px 0; box-shadow: inset 1px 1px #fff, inset -1px -1px #a0a0a0;
`;
const Footer = styled.div`display: flex; align-items: center; margin-top: 8px; padding-left: 7px; letter-spacing: -.1px;`;
const Button = styled.span<{ $v?: 'ok' | 'off'; $w?: number }>`
  width: ${p => p.$w ?? 73}px; height: 21px; line-height: 20px; text-align: center; margin-right: 8px;
  border: 1px solid ${p => p.$v === 'ok' ? '#3399ff' : p.$v === 'off' ? '#d4d4d4' : '#acacac'};
  background: ${p => p.$v === 'off' ? '#efefef' : 'linear-gradient(#f0f0f0,#e5e5e5)'}; color: ${p => p.$v === 'off' ? '#8c8c8c' : '#000'};
`;
const FooterMenu = styled.span`display: flex; align-items: center; gap: 8px; width: 203px; margin-left: -1px;`;

/* ---------- data ---------- */

const MENU: [string, number][] = [['File', 32], ['Edit', 34], ['View', 39], ['Model', 48], ['Symbol', 54], ['Report', 50], ['Repository', 70], ['Tools', 43], ['Window', 58], ['Help', 40]];
const GROUPS: string[][] = [
  ['newDoc', 'newProject', 'open', 'save', 'saveAll', 'previewGray', 'printer', 'cut', 'copy', 'paste', 'del', 'undo', 'redo', 'props', 'help'],
  ['book', 'pasteLink', 'findObj', 'refreshWin', 'check', 'shadow', 'textFit', 'brush', 'bucket', 'fontA', 'upGray', 'backGray', 'fwdGray'],
  ['vLinks', 'vNodes', 'vPage', 'vPages', 'vGray1', 'vGray2', 'vBrowse', 'vNote', 'vTable'],
  ['previewGray', 'printer'],
];
const PRESSED = ['vBrowse', 'vNote', 'vTable'];
const ROWS = [
  ['kode_mk', 'KODE_MK', 'Variable char', '7'],
  ['nama_mk', 'NAMA_MK', 'Variable char', '25'],
  ['semester', 'SEMESTER', 'Variable char', '2'],
  ['sks', 'SKS', 'Integer', ''],
];
const HEADS = ['Name', 'Code', 'Data Typ', 'Length', 'Preci', 'M', 'P', 'D'];
const GRID_TOOLS = ['props', '|', 'insRow', 'addRow', 'newRow', 'reuseRow', '|', 'key', '|', 'cut', 'copy', 'pasteGray', 'del', '|', 'binoc', '|', 'funnelEdit', 'funnelCheck', '|', 'excel', 'printer'];
const NAV = [
  'M1 1h8M5 3v7M2 6l3-3 3 3', 'M5 1v9M2.5 4L5 1.5 7.5 4M2 7.5l3-3 3 3', 'M5 3v7M2 6l3-3 3 3',
  'M5 0v7M2 4l3 3 3-3', 'M5 0v9M2.5 6L5 8.5 7.5 6M2 3l3 3 3-3', 'M1 9h8M5 0v6M2 3.5l3 3 3-3',
];

const Tick = () => (
  <svg width="9" height="9" viewBox="0 0 9 9"><path d="M1 4.5l2.5 2.8L8 1.5" stroke="#000" strokeWidth="2.1" fill="none" /></svg>
);
const HeadIconRow = styled.span`display: flex; align-items: center; gap: 7px; margin-left: auto;`;
const HeadIcons = () => (
  <HeadIconRow>
    <svg width="9" height="5" viewBox="0 0 9 5"><path d="M0 0h9L4.5 5z" fill="#c6c3a2" /></svg>
    <svg width="8" height="11" viewBox="0 0 8 11"><path d="M2.5.5h3v6h-3zM5 1v6M0 6.5h8M4 7v4" stroke="#c6c3a2" fill="none" /></svg>
    <svg width="10" height="10" viewBox="0 0 10 10"><path d="M1 1l8 8M9 1L1 9" stroke="#c6c3a2" strokeWidth="1.2" /></svg>
  </HeadIconRow>
);
const TabShape = ({ w, on }: { w: number; on?: boolean }) => (
  <svg width={w} height="16" viewBox={`0 0 ${w} 16`}>
    <path d={`M0 0L6 15.5H${w - 6}L${w} 0z`} fill={on ? '#fff' : '#ececec'} />
    <path d={`M0 0l6 15.5M${w - 6} 15.5L${w} 0`} stroke="#404040" fill="none" />
  </svg>
);

/* ---------- taskbar artwork ---------- */

const Start = () => <svg width="26" height="24" viewBox="0 0 26 24"><path d="M0 4l11-2v9.5H0zM12 1.8L26 0v11.5H12zM0 12.5h11V22L0 20.5zM12 12.5h14V24l-14-1.8z" fill="#fff" /></svg>;
const Store = () => <svg width="30" height="30" viewBox="0 0 30 30"><path d="M0 0h30v30H0z" fill="#008a00" /><path d="M9 10V6c0-3 7-3 7 0v3M12 9V7c0-3 8-3 8 0v3" stroke="#fff" fill="none" /><path d="M4 10h22l-2.5 16-17-1.5z" fill="#fff" /><path d="M9 14l5-.8v4H9zM15 13l6-1v5.2h-6zM9 18.3h5v4l-5-.8zM15 18.3h6v5.2l-6-1z" fill="#008a00" /></svg>;
const IE = () => <svg width="32" height="32" viewBox="0 0 32 32"><path d="M28 21c-2 5-6 8-11.5 8C9 29 4 24 4 17.5S9 6 16.5 6 29 11 28.5 19H12c0 3 2 5 5 5 2 0 4-1 5-3zM12 14.5h9.500c0-2.500-2-4-4.500-4-3 0-4.500 1.500-5 4z" fill="#48b4e8" stroke="#c4ecff" strokeWidth=".8" /><path d="M4 31C-2 29 6 11 18 5c8-4 13-4 11 3" stroke="#f4c430" strokeWidth="2.4" fill="none" /></svg>;
const ChromeIcon = () => <svg width="30" height="30" viewBox="0 0 30 30"><circle cx="15" cy="15" r="14.5" fill="#fcc934" /><path d="M15 15L2.5 7.5A14.5 14.5 0 0 0 14 29.5l6-11z" fill="#2f9e4f" /><path d="M2.5 7.5A14.5 14.5 0 0 1 28.2 9H15a6 6 0 0 0-6 5z" fill="#de4132" /><circle cx="15" cy="15" r="6.7" fill="#fff" /><circle cx="15" cy="15" r="5.3" fill="#4a8cf4" /></svg>;
const ExplorerIcon = () => <svg width="32" height="32" viewBox="0 0 32 32"><path d="M1 3h9l2 2h17v23H1z" fill="#e8c458" stroke="#b8902c" strokeWidth=".7" /><path d="M4 3h5v2H4z" fill="#48b048" /><path d="M13 5h5v2h-5z" fill="#e04848" /><path d="M20 7h6v2h-6z" fill="#4878d8" /><path d="M1 9h30v19H1z" fill="#fae89c" /><path d="M6 18h21v12h-6v-7h-9v7H6z" fill="#88c4e4" stroke="#c8ecfc" /></svg>;
const PaletteIcon = () => <svg width="32" height="32" viewBox="0 0 32 32"><path d="M16 1c10 0 15 7 15 16 0 10-9 15-17 14C5 30 0 22 1 14 2 6 9 1 16 1z" fill="#f8d078" stroke="#c89030" /><circle cx="8" cy="10" r="3" fill="#30a838" /><circle cx="17" cy="6.5" r="3.5" fill="#28a0d0" /><circle cx="7" cy="19" r="3.5" fill="#e03828" /><path d="M20 4c7 3 9 10 8 16-2-5-4-9-8-10z" fill="#fcecb0" /><circle cx="18" cy="26" r="2.8" fill="#605040" /></svg>;
const EagleIcon = () => <svg width="32" height="32" viewBox="0 0 32 32"><circle cx="16" cy="16" r="15" fill="#1848b0" stroke="#38a8f0" strokeWidth="2" /><path d="M2 12C5 5 18 4 24 8c3 2 4 4 4 7-4-1-7 0-9 3-2 4-5 6-10 7l3-5-7 1 5-4-8-1 5-3z" fill="#fff" /><path d="M6 9c4-3 12-3 17 0l-3 1 2 2c-5-2-10-2-16-3z" fill="#10307c" /><path d="M23 10c4 0 7 3 6 7l-5-3z" fill="#f0a020" /><path d="M10 27c2-5 6-6 8-9 3-3 7-3 10-2-1 9-9 15-18 11z" fill="#081c60" /></svg>;
const PdfLabel = styled.span`
  position: absolute; left: 0; right: 0; bottom: 1px; text-align: center; font: 8px/9px ${UI}; letter-spacing: .2px; color: #fff;
`;
const PdfTile = styled.span`position: relative; width: 32px; height: 32px;`;
const PdfIcon = () => <PdfTile><svg width="32" height="32" viewBox="0 0 32 32"><path d="M0 0h25v7h7v25H0z" fill="#f88c28" /><path d="M26 0l6 6h-6z" fill="#f88c28" /><path d="M16 2l12 11-12 11L4 13z" fill="#f8a050" /><path d="M21 8c-4-4-10-1-10 4.5 0 5 6 7.5 9.5 3.5v-4H16" stroke="#fff" strokeWidth="2.8" fill="none" /></svg><PdfLabel>PDF</PdfLabel></PdfTile>;
const PdIcon = () => <svg width="30" height="30" viewBox="0 0 30 30"><path d="M2 19l13-6 13 6-11 8z" fill="#3868b8" stroke="#1c3c80" /><path d="M6 21l13-6M10 24l13-7M8 17l13 8" stroke="#90b8f0" /><path d="M15 1c5 7 5 11 1 14-5-3-4-8-1-14z" fill="#48a840" /><circle cx="9" cy="12.5" r="5.5" fill="#d82828" stroke="#901818" strokeWidth=".6" /><path d="M19 4c1-1 5-1 6 0v13c-1 1.5-5 1.5-6 0z" fill="#f0b830" stroke="#a87010" strokeWidth=".7" /></svg>;

const WinMin = () => <svg width="34" height="19"><path d="M9 12h8v2H9z" fill="#222" /></svg>;
const WinMax = () => <svg width="21" height="19" viewBox="0 0 21 19" fill="none" stroke="#222"><path d="M.7 6.5h6.800v6.500H.7z" strokeWidth="1.4" /><path d="M2.500 4.500h7v7" /></svg>;

/* ---------- composition ---------- */

const ObjectBrowser = () => (
  <LeftDock>
    <PanelHead>Object Browser<HeadIcons /></PanelHead>
    <LeftBody>
      <TreeFrame>
        <FilterRow>Filter:<FilterInput /><Icon n="funnelX" /><svg width="6" height="1" /><Icon n="reload" s={15} /></FilterRow>
        <TreeRow $d={4}><Icon n="workspace" /><Label>Workspace</Label></TreeRow>
        <TreeRow $d={8}><Expander /><Icon n="model" s={15} /><Label $sel>prakbasdat_05042018-0723 *</Label></TreeRow>
        <TreeRow $d={43}><Icon n="cube" s={15} /><Label>Diagram_1</Label></TreeRow>
        {['Data Items', 'Entities'].map(t => <TreeRow key={t} $d={27}><Expander $plus /><Icon n="folder" /><Label>{t}</Label></TreeRow>)}
      </TreeFrame>
    </LeftBody>
    <DockTabs>
      <DockTab $on $w={63}><Icon n="vBrowse" />Local</DockTab>
      <DockTab $w={81}><Icon n="repo" />Repository</DockTab>
    </DockTabs>
  </LeftDock>
);

const Diagram = () => (
  <DocArea>
    <DocTabs>
      <DocTabShape $on>Diagram_1</DocTabShape>
      <DocTabShape>Result List</DocTabShape>
      <PushH>
        <svg width="27" height="19" viewBox="0 0 27 19"><path d="M0 5h9v1.5H0zM0 8h9l-4.5 4z" fill="#222" /><path d="M17.5 4l8 8M25.5 4l-8 8" stroke="#222" strokeWidth="1.6" /></svg>
      </PushH>
    </DocTabs>
    <DocFrame>
      <Canvas>
        <Paper>
          <EntityBox>M&gt;</EntityBox>
          <Handle $y={78} /><Handle $y={122} /><Handle $y={169} />
        </Paper>
      </Canvas>
      <VScroll><Chevron d="up" /><Thumb $h={17} $gap={167} /><PushV><Chevron d="down" /></PushV></VScroll>
      <HScroll><Chevron d="left" /><PushH><Chevron d="right" /></PushH></HScroll>
      <HScroll />
    </DocFrame>
  </DocArea>
);

const Toolbox = () => (
  <ToolDock>
    <PanelHead>Toolbox<HeadIcons /></PanelHead>
    <ToolBody>
      <ToolModes><Tool $on><Icon n="grid9" /></Tool><Tool><Icon n="list3" /></Tool></ToolModes>
      <GroupHead><Round up /><span>Standard</span></GroupHead>
      <Palette $h={53}>
        {['arrow', 'hand', 'zoomIn', 'zoomOut', 'zoomPage', 'props', 'cutRed', 'note', 'link'].map(n => <Tool key={n} $on={n === 'arrow'}><Icon n={n} /></Tool>)}
      </Palette>
      <GroupHead><Round up /><span>Conceptual Diagram</span></GroupHead>
      <Palette $h={53}>
        {['package', 'plainTable', 'relation', 'inherit', 'assoc', 'assocLink', 'file'].map(n => <Tool key={n}><Icon n={n} /></Tool>)}
      </Palette>
      <GroupHead $closed><Round /><span>Free Symbols</span></GroupHead>
      <GroupHead $closed><Round /><span>Predefined Symbols</span></GroupHead>
    </ToolBody>
  </ToolDock>
);

const EntityDialog = () => (
  <Dialog>
    <DlgTitle>
      <Icon n="plainTable" />
      <DlgName>Entity Properties - Mata_kuliah (MATA_KULIAH)</DlgName>
      <DlgButtons>
        <svg width="44" height="20"><path d="M0 12h8v2H0z" fill="#8c8c8c" /><path d="M26.5 6.5h9v7h-9zM26 7.5h10" stroke="#222" fill="none" /></svg>
        <CloseBox $c="#c75050" $w={45} $h={20}><svg width="8" height="8"><path d="M.5.5l7 7M7.5.5l-7 7" stroke="#fff" strokeWidth="1.6" /></svg></CloseBox>
      </DlgButtons>
    </DlgTitle>
    <DlgBody>
      <Tabs>
        <Tab $w={47}>General</Tab><Tab $w={60} $on>Attributes</Tab><Tab $w={55}>Identifiers</Tab><Tab $w={42}>Notes</Tab><Tab $w={40}>Rules</Tab>
      </Tabs>
      <Pane><PaneInner>
        <GridTools>
          {GRID_TOOLS.map((n, i) => n === '|' ? <Sep key={i} /> : <GTool key={i} $on={n === 'funnelCheck'}><Icon n={n} /></GTool>)}
          <svg width="4" height="1" /><Caret />
        </GridTools>
        <GridFrame>
          <Sheet>
            <HeadRow>
              <HeadCell />
              {HEADS.map(h => <HeadCell key={h}><span>{h}</span><Drop><Caret c="#3838b0" /></Drop></HeadCell>)}
              <HeadCell><span>Domai</span></HeadCell>
            </HeadRow>
            {Array.from({ length: 17 }, (_, i) => {
              const r = ROWS[i], last = i === 16;
              return (
                <Row key={i}>
                  <RowHead>{r ? i + 1 : ''}</RowHead>
                  {i === 0
                    ? <Cell><Selected>{r[0]}</Selected><Equals>=</Equals></Cell>
                    : <Cell $last={last}>{r?.[0]}</Cell>}
                  {[1, 2, 3, 4].map(c => <Cell key={c} $last={last}>{r?.[c]}</Cell>)}
                  <CheckCell $last={last}><Check $hot={i === 0}>{i === 0 && <Tick />}</Check></CheckCell>
                  <CheckCell $last={last}><Check>{i === 0 && <Tick />}</Check></CheckCell>
                  <CheckCell $last={last}><Check>{r && <Tick />}</Check></CheckCell>
                  <Cell $last={last}>{r && '<None>'}</Cell>
                </Row>
              );
            })}
          </Sheet>
          <GridVScroll>
            <Chevron d="up" /><Thumb $h={206} $gap={3} />
            <svg width="8" height="17" viewBox="0 -7 8 17"><path d={CHEV.down} stroke="#505050" strokeWidth="2" fill="none" /></svg>
            <EdgeBtn><svg width="9" height="7"><path d="M0 .5h9" stroke="#505050" /><path d="M0 6h9L4.5 2z" fill="#505050" /></svg></EdgeBtn>
            <EdgeBtn><svg width="9" height="7"><path d="M0 6.5h9" stroke="#000" /><path d="M0 0h9L4.5 5z" fill="#000" /></svg></EdgeBtn>
          </GridVScroll>
          <GridHScroll>
            <SmallNav>
              {NAV.map((d, i) => <NavBtn key={d} $w={17}><svg width="10" height="10"><path d={d} stroke={i === 3 || i === 5 ? '#000' : '#606060'} strokeWidth="1.7" fill="none" /></svg></NavBtn>)}
            </SmallNav>
            <svg width="3" height="8" /><Chevron d="left" /><Thumb $w={370} $gap={5} />
            <svg width="51" height="8" /><Chevron d="right" />
          </GridHScroll>
          <HScroll />
        </GridFrame>
      </PaneInner></Pane>
      <Footer>
        <Button $w={72}>More &gt;&gt;</Button>
        <FooterMenu><Icon n="menuDoc" /><Caret /></FooterMenu>
        <Button $v="ok">OK</Button><Button>Cancel</Button><Button $v="off">Apply</Button><Button>Help</Button>
      </Footer>
    </DlgBody>
  </Dialog>
);

const App = () => (
  <Screen>
    <Global />
    <TitleBar>
      <Icon n="pd" s={17} />
      <AppTitle>PowerDesigner [CDM prakbasdat_05042018-0723, Diagram_1]</AppTitle>
      <WinButtons>
        <WinMin /><WinMax />
        <CloseBox $c="#bcbcbc" $w={45} $h={19} $mr={3}><svg width="9" height="8"><path d="M.5.5l7.5 7M8 .5l-7.5 7" stroke="#fff" strokeWidth="1.6" /></svg></CloseBox>
      </WinButtons>
    </TitleBar>
    <MenuBar>{MENU.map(([t, w]) => <MenuItem key={t} $w={w}><u>{t[0]}</u>{t.slice(1)}</MenuItem>)}</MenuBar>
    <ToolStrip>
      {GROUPS.map((g, i) => (
        <React.Fragment key={i}>
          <ToolGroup>{g.map(n => <ToolButton key={n} $on={PRESSED.includes(n)}><Icon n={n} /></ToolButton>)}</ToolGroup>
          <Overflow><Caret c="#555" w={6} /></Overflow>
        </React.Fragment>
      ))}
    </ToolStrip>
    <Workspace><ObjectBrowser /><Diagram /><Toolbox /></Workspace>
    <Output>
      <PanelHead>Output<HeadIcons /></PanelHead>
      <OutMain><ScrollW><Chevron d="up" /><Thumb $h={133} $gap={2} /><PushV><Chevron d="down" /></PushV></ScrollW></OutMain>
      <OutFoot>
        <OutTabs>
          <Step><svg width="6" height="7"><path d="M5 0v7L1 3.5z" fill="#888" /></svg></Step>
          <Step><svg width="6" height="7"><path d="M1 0v7l4-3.5z" fill="#888" /></svg></Step>
          <svg width="3" height="1" />
          {([['General', 62], ['Check Model', 92], ['Generation', 81], ['Reverse', 64]] as [string, number][]).map(([t, w], i) => (
            <OutTab key={t} $w={w} $on={i === 0}><TabShape w={w} on={i === 0} />{t}</OutTab>
          ))}
        </OutTabs>
        <OutHScroll><Chevron d="left" /><Thumb $w={653} $gap={5} /><svg width="5" height="1" /><Chevron d="right" />
          <PushH><svg width="9" height="9"><path d="M6 0h2v2H6zM3 3h2v2H3zM6 3h2v2H6zM0 6h2v2H0zM3 6h2v2H3zM6 6h2v2H6z" fill="#bbb" /></svg></PushH>
        </OutHScroll>
      </OutFoot>
    </Output>
    <Status>Entity 'Mata_kuliah'</Status>
    <Taskbar>
      <TaskItem $w={48}><Start /></TaskItem>
      <TaskItem $w={56}><Store /></TaskItem>
      <TaskItem $w={60} $nudge={4}><IE /></TaskItem>
      <TaskItem $w={58} $kind="run"><ChromeIcon /></TaskItem>
      <TaskItem $w={58} $kind="run"><ExplorerIcon /></TaskItem>
      <TaskItem $w={58}><PaletteIcon /></TaskItem>
      <TaskItem $w={58} $kind="run"><EagleIcon /></TaskItem>
      <TaskItem $w={58} $kind="run"><PdfIcon /></TaskItem>
      <TaskItem $w={58} $kind="on"><PdIcon /></TaskItem>
      <Tray>
        <svg width="15" height="16"><path d="M2 11h8L6 7z" fill="#fff" /></svg>
        <svg width="16" height="17"><path d="M1.5 1v15" stroke="#fff" strokeWidth="1.5" /><path d="M2 2c4-1 5 2 11 1v7c-5 1-7-2-11-1z" fill="#f4f4f4" /><circle cx="11" cy="12" r="4" fill="#d82020" stroke="#fff" strokeWidth=".7" /><path d="M9.5 10.5l3 3M12.5 10.5l-3 3" stroke="#fff" strokeWidth="1.3" /></svg>
        <svg width="16" height="17"><path d="M2 1v3M5 1v3M1 5h5v3H1zM3.5 8v8" stroke="#fff" fill="#fff" /><path d="M9.5 2.5h5v12h-5z" stroke="#aaa" fill="#444" /><path d="M8 8l7 7M15 8l-7 7" stroke="#d81818" strokeWidth="2" /></svg>
        <svg width="16" height="16"><path d="M1 12h2v2H1zM4 10h2v4H4zM7 8h2v6H7zM10 5h2v9h-2zM13 3h2v11h-2z" fill="#fff" /></svg>
        <svg width="16" height="16"><path d="M1 5h3l4-4v14l-4-4H1z" fill="#fff" /><path d="M10 5.5c1.5 1.5 1.5 3.5 0 5M12 3.5c2.5 2.5 2.5 6.500 0 9" stroke="#ddd" fill="none" /></svg>
        <Clock>7:34<br />05/04/2018</Clock>
      </Tray>
    </Taskbar>
    <EntityDialog />
  </Screen>
);

export default App;
